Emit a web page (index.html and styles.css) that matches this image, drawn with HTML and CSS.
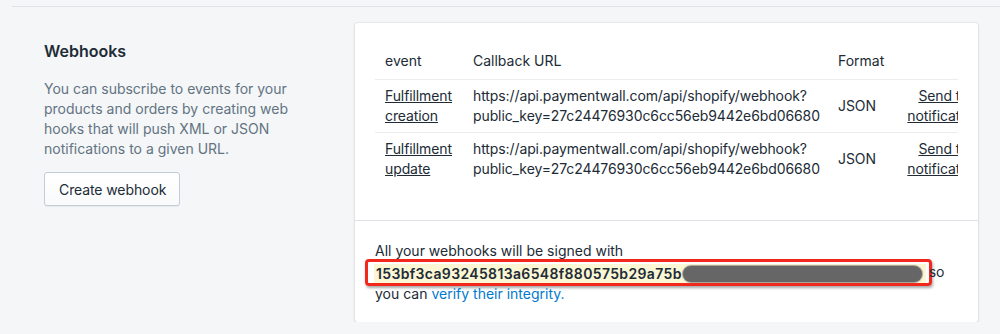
FILE: index.html
```html
<!DOCTYPE html>
<html lang="en">
<head>
    <meta charset="UTF-8">
    <title>Webhooks</title>
    <link rel="stylesheet" href="styles.css">
</head>
<body>
    <div class="section">
        <div class="aside">
            <h2>Webhooks</h2>
            <p>You can subscribe to events for your products and orders by creating web hooks that will push XML or JSON notifications to a given URL.</p>
            <button class="btn">Create webhook</button>
        </div>

        <div class="card">
            <div class="card-section table-section">
                <div class="table-wrap">
                    <table>
                        <thead>
                            <tr>
                                <th class="col-event">event</th>
                                <th class="col-url">Callback URL</th>
                                <th class="col-format">Format</th>
                                <th class="col-action"></th>
                            </tr>
                        </thead>
                        <tbody>
                            <tr>
                                <td><a href="#" class="link-dark">Fulfillment<br>creation</a></td>
                                <td>https://api.paymentwall.com/api/shopify/webhook?<br>public_key=27c24476930c6cc56eb9442e6bd06680</td>
                                <td>JSON</td>
                                <td class="action"><a href="#" class="link-dark">Send test<br>notification</a></td>
                            </tr>
                            <tr>
                                <td><a href="#" class="link-dark">Fulfillment<br>update</a></td>
                                <td>https://api.paymentwall.com/api/shopify/webhook?<br>public_key=27c24476930c6cc56eb9442e6bd06680</td>
                                <td>JSON</td>
                                <td class="action"><a href="#" class="link-dark">Send test<br>notification</a></td>
                            </tr>
                        </tbody>
                    </table>
                </div>
            </div>

            <div class="card-section signed">
                All your webhooks will be signed with<br>
                <span class="annot"><code class="secret">153bf3ca93245813a6548f880575b29a75b<span class="redact"></span></code></span> so<br>
                you can <a href="#" class="link">verify their integrity.</a>
            </div>
        </div>
    </div>
</body>
</html>
```

FILE: styles.css
```css
* { margin: 0; padding: 0; box-sizing: border-box; }
body {
    font-family: Inter, "Noto Sans", sans-serif;
    font-size: 14px;
    line-height: 20px;
    background: #f4f6f8;
    color: #212b36;
}
.section {
    display: flex;
    margin: 6px 0 0 12px;
    border-top: 1px solid #dfe3e8;
    padding-top: 16px;
}
.aside {
    width: 343px;
    flex-shrink: 0;
    padding: 16px 20px 0 32px;
}
.aside h2 {
    font-size: 16px;
    line-height: 24px;
    font-weight: 600;
    margin-bottom: 16px;
}
.aside p {
    color: #637381;
    max-width: 262px;
    margin-bottom: 13px;
}
.btn {
    font-family: inherit;
    font-size: 14px;
    color: #212b36;
    height: 34px;
    padding: 0 13px 0 14px;
    letter-spacing: -0.1px;
    background: linear-gradient(180deg, #fff, #f9fafb);
    border: 1px solid #c4cdd5;
    border-radius: 3px;
    box-shadow: 0 1px 0 0 rgba(22,29,37,0.05);
}
.card {
    width: 623px;
    background: #fff;
    border-radius: 3px;
    box-shadow: 0 0 0 1px rgba(63,63,68,0.05), 0 1px 3px 0 rgba(63,63,68,0.15);
}
.card-section { padding: 20px; }
.table-section { padding-bottom: 35px; }
.table-wrap { overflow: hidden; }
table {
    border-collapse: collapse;
    width: 621px;
    table-layout: fixed;
}
th {
    font-weight: 400;
    text-align: left;
    padding: 8px 10px;
    border-bottom: 1px solid #ebeef0;
}
td {
    padding: 6px 10px;
    vertical-align: middle;
    white-space: nowrap;
    letter-spacing: -0.1px;
    border-bottom: 1px solid #ebeef0;
}
tbody tr:last-child td { border-bottom: none; }
.col-event { width: 88px; }
.col-url { width: 365px; }
.col-format { width: 68px; }
.col-action { width: 100px; }
td.action { text-align: right; padding-right: 16px; }
.link-dark { color: #212b36; text-decoration: underline; }
.link { color: #007ace; text-decoration: none; }
.signed {
    border-top: 1px solid #dfe3e8;
    padding: 19px 20px 18px;
    line-height: 21px;
}
.annot {
    display: inline-block;
    height: 27px;
    margin: -4px -7px -3px -10px;
    padding: 1px 3px 0 6px;
    border: 3px solid #f2281d;
    border-radius: 4px;
    box-shadow: 1px 2px 3px rgba(0,0,0,0.35);
    vertical-align: middle;
}
.secret {
    display: inline-flex;
    align-items: center;
    height: 19px;
    padding: 0 4px 0 2px;
    background: #fbf6d4;
    font-family: Inter, sans-serif;
    font-weight: 600;
    font-size: 14px;
    letter-spacing: 0.35px;
    color: #212b36;
}
.redact {
    display: inline-block;
    width: 239px;
    height: 16px;
    margin-left: 1px;
    border-radius: 8px;
    background: #666;
    box-shadow: 0 0 1px 1px rgba(102,102,102,0.6);
}
```
